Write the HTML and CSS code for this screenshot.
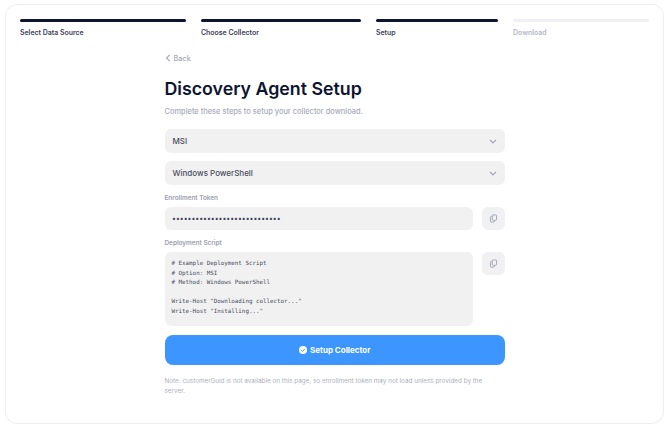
FILE: index.html
```html
<!DOCTYPE html>
<html lang="en">
<head>
<meta charset="utf-8">
<title>Discovery Agent Setup</title>
<link rel="stylesheet" href="styles.css">
</head>
<body>
<main class="card">
  <ol class="stepper">
    <li class="step done"><span class="bar"></span><span class="step-label">Select Data Source</span></li>
    <li class="step done"><span class="bar"></span><span class="step-label">Choose Collector</span></li>
    <li class="step done"><span class="bar"></span><span class="step-label">Setup</span></li>
    <li class="step"><span class="bar"></span><span class="step-label">Download</span></li>
  </ol>
  <section class="form">
    <a class="back"><svg class="back-icon" viewBox="0 0 6 8"><path d="M4.6 1 L1.6 4 L4.6 7"/></svg>Back</a>
    <h1 class="title">Discovery Agent Setup</h1>
    <p class="subtitle">Complete these steps to setup your collector download.</p>
    <div class="select"><span>MSI</span><svg class="chev" viewBox="0 0 8 5"><path d="M1 1 L4 4 L7 1"/></svg></div>
    <div class="select second"><span>Windows PowerShell</span><svg class="chev" viewBox="0 0 8 5"><path d="M1 1 L4 4 L7 1"/></svg></div>
    <label class="label">Enrollment Token</label>
    <div class="row">
      <div class="field token">••••••••••••••••••••••••••••</div>
      <button class="copy"><svg class="copy-icon" viewBox="0 0 10 10"><rect x="3.6" y="1" width="4.8" height="6" rx="1.2"/><path d="M3.4 2.6 H2.8 A1.2 1.2 0 0 0 1.6 3.8 V7.8 A1.2 1.2 0 0 0 2.8 9 H5 A1.2 1.2 0 0 0 6.2 7.8 V7.4"/></svg></button>
    </div>
    <label class="label label-script">Deployment Script</label>
    <div class="row">
      <pre class="field script"># Example Deployment Script
# Option: MSI
# Method: Windows PowerShell

Write-Host "Downloading collector..."
Write-Host "Installing..."</pre>
      <button class="copy"><svg class="copy-icon" viewBox="0 0 10 10"><rect x="3.6" y="1" width="4.8" height="6" rx="1.2"/><path d="M3.4 2.6 H2.8 A1.2 1.2 0 0 0 1.6 3.8 V7.8 A1.2 1.2 0 0 0 2.8 9 H5 A1.2 1.2 0 0 0 6.2 7.8 V7.4"/></svg></button>
    </div>
    <button class="primary"><svg class="check" viewBox="0 0 8 8"><circle cx="4" cy="4" r="4"/><path d="M2.2 4.1 L3.5 5.4 L5.8 2.9"/></svg>Setup Collector</button>
    <p class="note">Note: customerGuid is not available on this page, so enrollment token may not load unless provided by the server.</p>
  </section>
</main>
</body>
</html>
```
FILE: styles.css
```css
* { box-sizing: border-box; }
html, body { margin: 0; height: 100%; background: #fff; }
body { padding: 4px 5px 2px; font-family: Inter, "Liberation Sans", sans-serif; overflow: hidden; }
.card {
  width: 659px; height: 420px;
  border: 1px solid #eeeef0; border-radius: 12px; background: #fff;
  padding: 14px 14px 0;
}
.stepper {
  list-style: none; margin: 0; padding: 0;
  display: grid; grid-template-columns: 166px 160px 122px 136px; column-gap: 15px;
}
.step { display: flex; flex-direction: column; gap: 6px; }
.bar { height: 3px; border-radius: 2px; background: #f0f0f5; }
.done .bar { background: #0d1530; }
.step-label { font-size: 6.95px; line-height: 10px; font-weight: 600; color: #3c415a; }
.step:not(.done) .step-label { color: #b4b6c6; }
.form { width: 340.5px; margin-left: 144.5px; padding-top: 16px; display: flex; flex-direction: column; }
.back { display: flex; align-items: center; font-size: 7.3px; line-height: 10px; font-weight: 500; color: #a4a6ba; height: 10px; }
.back-icon { width: 6px; height: 8px; margin-right: 3px; margin-top: -2px; fill: none; stroke: #a4a6ba; stroke-width: 1.1; }
.title { margin: 11px 0 0; font-size: 17.8px; line-height: 28px; font-weight: 600; color: #0d1530; }
.subtitle { margin: 3px 0 0; font-size: 7.45px; line-height: 12px; font-weight: 500; color: #a8aabd; }
.select, .field { background: #f1f1f1; border-radius: 6px; }
.select {
  margin-top: 11px; height: 24px; padding: 0 8px;
  display: flex; align-items: center; justify-content: space-between;
  font-size: 8px; font-weight: 500; color: #4a4d5e;
}
.select.second { margin-top: 8px; }
.chev { width: 8px; height: 5px; fill: none; stroke: #a4a6ba; stroke-width: 1.2; }
.label { margin-top: 8px; font-size: 6.4px; line-height: 10px; font-weight: 600; color: #9da0b2; }
.label-script { margin-top: 8px; }
.row { margin-top: 4px; display: flex; align-items: flex-start; gap: 9px; }
.field { flex: 1; min-width: 0; }
.token { height: 23px; padding: 0 7.5px; display: flex; align-items: center; font-size: 6.9px; color: #3c415a; }
.script {
  margin: 0; height: 74px; padding: 7px;
  font-family: "DejaVu Sans Mono", "Liberation Mono", monospace;
  font-size: 5.85px; line-height: 9.5px; color: #4a4d5e;
}
.copy { width: 23px; height: 23px; flex: none; padding: 0; border: 0; border-radius: 6px; background: #f1f1f4; display: flex; align-items: center; justify-content: center; }
.copy-icon { width: 9px; height: 9px; fill: none; stroke: #a4a6ba; stroke-width: 1.1; }
.primary {
  margin-top: 9px; height: 29.5px; border: 0; border-radius: 8px; background: #3d95ff; color: #fff;
  display: flex; align-items: center; justify-content: center; gap: 3px;
  font-family: inherit; font-size: 8px; font-weight: 700;
}
.check { width: 8px; height: 8px; }
.check circle { fill: #fff; }
.check path { fill: none; stroke: #3d95ff; stroke-width: 1; }
.note { margin: 11px 0 0; padding-right: 14px; font-size: 6.35px; line-height: 10px; color: #adafc1; }
```
